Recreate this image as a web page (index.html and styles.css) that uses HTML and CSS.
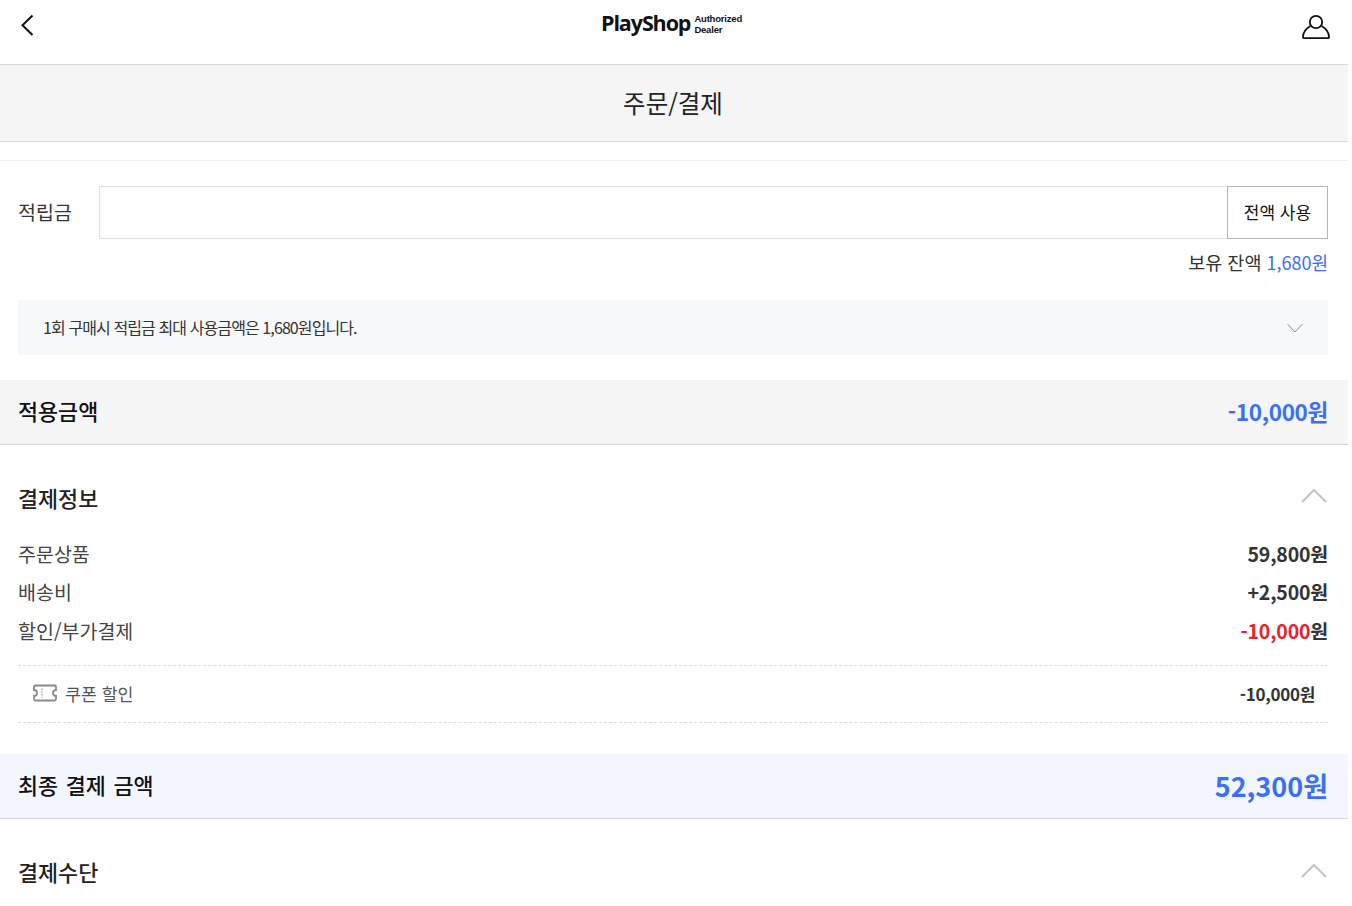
FILE: index.html
```html
<!DOCTYPE html>
<html lang="ko">
<head>
<meta charset="utf-8">
<title>주문/결제</title>
<link rel="stylesheet" href="styles.css">
</head>
<body>
<div class="page">
  <header class="topbar">
    <svg class="back" width="16" height="24" viewBox="0 0 16 24"><path d="M13.500 2.500 3.500 12.200 13.500 22" fill="none" stroke="#111" stroke-width="2"/></svg>
    <div class="logo"><span class="logo-main">PlayShop</span><span class="logo-sub">Authorized<br>Dealer</span></div>
    <svg class="user" width="30" height="28" viewBox="0 0 30 28"><circle cx="15" cy="9" r="6.200" fill="none" stroke="#111" stroke-width="1.800"/><path d="M9.500 13C5 15.500 2 20 2 24.200c0 .6.400 1 1 1h24c.6 0 1-.4 1-1 0-4.200-3-8.700-7.500-11.200" fill="none" stroke="#111" stroke-width="1.800"/></svg>
  </header>
  <h1 class="title">주문/결제</h1>
  <div class="thin-rule"></div>
  <section class="points">
    <div class="point-row">
      <label class="point-label">적립금</label>
      <div class="point-input"></div>
      <button class="use-all">전액 사용</button>
    </div>
    <p class="balance"><span class="balance-label">보유 잔액</span> <span class="blue">1,680원</span></p>
    <div class="notice">
      <span class="notice-text">1회 구매시 적립금 최대 사용금액은 1,680원입니다.</span>
      <svg width="16" height="10" viewBox="0 0 16 10"><path d="M.5 1 8 9 15.500 1" fill="none" stroke="#8d8f96" stroke-width="1"/></svg>
    </div>
  </section>
  <div class="band applied">
    <strong>적용금액</strong>
    <strong class="blue amount-md">-10,000원</strong>
  </div>
  <section class="info">
    <div class="section-head">
      <h2>결제정보</h2>
      <svg class="chev" width="26" height="15" viewBox="0 0 26 15"><path d="M1 14 13 2 25 14" fill="none" stroke="#c4c4c4" stroke-width="2"/></svg>
    </div>
    <div class="line"><span>주문상품</span><b>59,800원</b></div>
    <div class="line"><span>배송비</span><b>+2,500원</b></div>
    <div class="line"><span>할인/부가결제</span><b><span class="red">-10,000</span>원</b></div>
    <div class="coupon">
      <span class="coupon-name">
        <svg width="24" height="18" viewBox="0 0 24 18"><path d="M2.500 1.500h19a1.500 1.500 0 0 1 1.500 1.500v3a3 3 0 0 0 0 6v3a1.500 1.500 0 0 1-1.500 1.500h-19A1.500 1.500 0 0 1 1 15v-3a3 3 0 0 0 0-6V3a1.500 1.500 0 0 1 1.500-1.500Z" fill="none" stroke="#8a8a8a" stroke-width="1.800"/><path d="M9 4v10" stroke="#aaa" stroke-width="1" stroke-dasharray="2 1"/></svg>
        <span class="coupon-text">쿠폰 할인</span>
      </span>
      <b>-10,000원</b>
    </div>
  </section>
  <div class="band final">
    <strong class="final-label">최종 결제 금액</strong>
    <strong class="blue amount-lg">52,300원</strong>
  </div>
  <section class="method">
    <div class="section-head">
      <h2>결제수단</h2>
      <svg class="chev" width="26" height="15" viewBox="0 0 26 15"><path d="M1 14 13 2 25 14" fill="none" stroke="#c4c4c4" stroke-width="2"/></svg>
    </div>
  </section>
</div>
</body>
</html>
```
FILE: styles.css
```css
* { box-sizing: border-box; }
html, body { margin: 0; padding: 0; background: #fff; }
body { font-family: "Noto Sans CJK KR", "Noto Sans", sans-serif; color: #222; overflow: hidden; height: 906px; }
.page { width: 1348px; }
h1, h2, p { margin: 0; font-weight: 500; }
.topbar { height: 65px; display: flex; align-items: center; justify-content: space-between; padding: 0 20px 14px 19px; border-bottom: 1px solid #d9d9d9; position: relative; }
.logo { position: absolute; left: 601px; top: 9px; display: flex; align-items: center; gap: 4px; color: #111; }
.logo-main { font-family: "Open Sans", sans-serif; font-weight: 700; font-size: 21.500px; letter-spacing: -1.100px; line-height: 28px; }
.logo-sub { font-family: "Liberation Sans", sans-serif; font-weight: 700; font-size: 9.500px; line-height: 11px; letter-spacing: -.2px; padding-top: 2px; }
.user { margin-right: -3px; margin-top: 4px; }
.title { height: 77px; background: #f5f5f5; border-bottom: 1px solid #d9d9d9; display: flex; align-items: center; justify-content: center; font-size: 24.500px; font-weight: 400; color: #222; padding: 0 2px 2px 0; }
.thin-rule { height: 19px; border-bottom: 1px solid #eee; }
.points { padding: 25px 20px 25px 18px; }
.point-row { display: flex; align-items: stretch; height: 53px; }
.point-label { width: 81px; font-size: 19.500px; line-height: 52px; color: #333; }
.point-input { flex: 1; border: 1px solid #e0e0e0; border-right: 0; background: #fff; }
.use-all { width: 101px; border: 1px solid #b5b5b5; background: #fff; font: 400 17px "Noto Sans CJK KR", sans-serif; color: #111; padding: 0 0 2px; }
.balance { text-align: right; font-size: 18px; font-weight: 400; line-height: 26px; margin-top: 10px; color: #333; }
.balance-label { font-size: 18.500px; }
.blue { color: #3a70f5; }
.notice { margin-top: 25px; height: 55px; background: #f7f8fa; display: flex; align-items: center; justify-content: space-between; padding: 0 25px; font-size: 16px; letter-spacing: -.9px; color: #333; }
.notice-text { padding-bottom: 2px; }
.band { display: flex; align-items: center; justify-content: space-between; padding: 0 20px 4px 18px; font-size: 21.800px; color: #111; }
.band strong { font-weight: 500; }
.applied { height: 65px; background: #f5f5f5; border-bottom: 1px solid #d5d5d5; }
.band .amount-md { font-size: 22.500px; font-weight: 700; letter-spacing: -.3px; padding-top: 1px; }
.info { padding: 0 20px 0 18px; height: 309px; }
.section-head { height: 109px; display: flex; align-items: center; justify-content: space-between; padding-bottom: 4px; }
.section-head h2 { font-size: 21.800px; color: #222; }
.chev { margin-right: 1px; margin-top: -4px; }
.method .chev { margin-top: -2px; }
.line { display: flex; justify-content: space-between; align-items: center; height: 38.500px; font-size: 19.500px; color: #444; }
.line b { font-weight: 700; font-size: 19.500px; color: #333; letter-spacing: -.2px; }
.red { color: #e52330; }
.section-head + .line { margin-top: -20px; }
.coupon { margin-top: 15px; height: 58px; border-top: 1px dashed #ddd; border-bottom: 1px dashed #ddd; display: flex; justify-content: space-between; align-items: center; padding: 0 13px 1px 15px; font-size: 17.300px; color: #555; }
.coupon-name { display: flex; align-items: center; gap: 8px; }
.coupon b { font-weight: 700; font-size: 17px; color: #333; letter-spacing: -.3px; }
.final { height: 65px; background: #f4f6ff; border-bottom: 1px solid #d8d8e0; }
.final-label { word-spacing: 1.500px; }
.band .amount-lg { font-size: 27px; font-weight: 700; padding-top: 2px; }
.method { padding: 0 20px 0 18px; }
```
